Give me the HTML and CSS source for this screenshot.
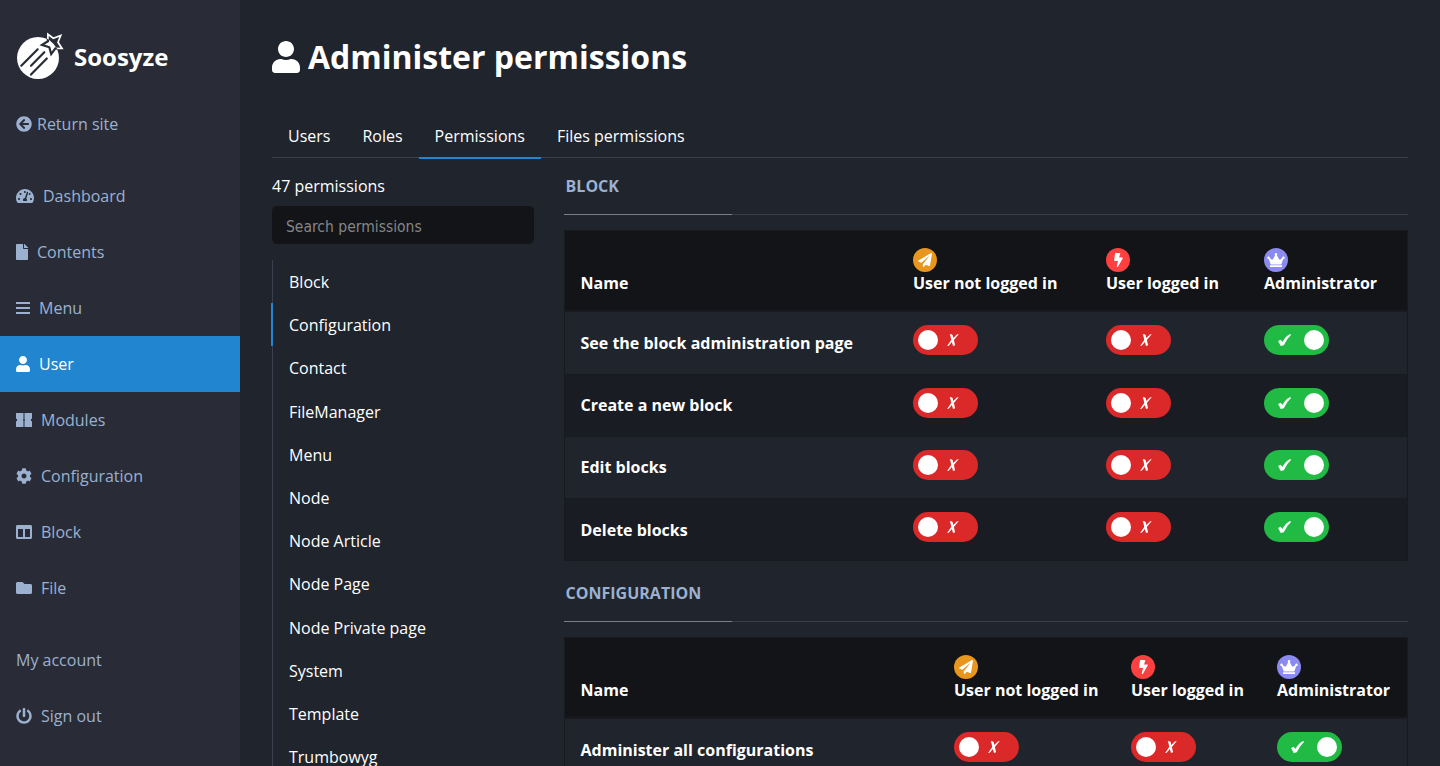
FILE: index.html
```html
<!DOCTYPE html>
<html lang="en">
<head>
<meta charset="utf-8">
<title>Administer permissions</title>
<link rel="stylesheet" href="styles.css">
</head>
<body>
<svg class="sprite" aria-hidden="true">
  <symbol id="user" viewBox="0 0 448 512"><path d="M224 256c70.7 0 128-57.3 128-128S294.7 0 224 0 96 57.3 96 128s57.3 128 128 128zm89.6 32h-16.7c-22.2 10.2-46.9 16-72.9 16s-50.6-5.8-72.9-16h-16.7C60.2 288 0 348.2 0 422.4V464c0 26.5 21.5 48 48 48h352c26.5 0 48-21.5 48-48v-41.6c0-74.2-60.2-134.4-134.4-134.4z"/></symbol>
  <symbol id="plane" viewBox="0 0 512 512"><path d="M476 3.2L12.5 270.6c-18.1 10.4-15.8 35.6 2.2 43.2L121 358.4l287.3-253.2c5.5-4.9 13.3 2.6 8.6 8.3L176 407v80.5c0 23.6 28.5 32.9 42.5 15.8L282 426l124.6 52.2c14.2 6 30.4-2.9 33-18.2l72-432C515 7.8 493.3-6.8 476 3.2z"/></symbol>
  <symbol id="bolt" viewBox="0 0 320 512"><path d="M296 160H180.6l42.6-129.8C227.2 15 215.7 0 200 0H56C44 0 33.8 8.9 32.2 20.8l-32 240C-1.7 275.2 9.5 288 24 288h118.7L96.6 482.5c-3.6 15.2 8 29.5 23.3 29.5 8.4 0 16.4-4.4 20.8-12l176-304c9.3-15.9-2.2-36-20.7-36z"/></symbol>
  <symbol id="crown" viewBox="0 0 640 512"><path d="M528 448H112c-8.8 0-16 7.2-16 16v32c0 8.8 7.2 16 16 16h416c8.8 0 16-7.2 16-16v-32c0-8.8-7.2-16-16-16zm64-320c-26.5 0-48 21.5-48 48 0 7.1 1.6 13.7 4.4 19.8L476 239.2c-15.4 9.2-35.3 4-44.2-11.6L350.3 85C361 76.2 368 63 368 48c0-26.5-21.5-48-48-48s-48 21.5-48 48c0 15 7 28.2 17.7 37l-81.5 142.6c-8.9 15.6-28.9 20.8-44.2 11.6l-72.3-43.4c2.7-6 4.4-12.7 4.4-19.8 0-26.5-21.5-48-48-48S0 149.5 0 176s21.5 48 48 48c2.6 0 5.2-.4 7.7-.8L128 416h384l72.3-192.8c2.5.4 5.1.8 7.7.8 26.5 0 48-21.5 48-48s-21.5-48-48-48z"/></symbol>
  <symbol id="cross" viewBox="0 0 12 12"><path d="M2.700.3Q5.200-.2 5.800 1.400L6.300 3.900L9.900.400L11.800.100L6.900 5.900L8.100 11.200L6 11.900L4.900 7.900L1.700 11.700L.1 12L4.200 5.900L3.500 2.200Z"/></symbol>
  <symbol id="check" viewBox="0 0 13 12"><path d="M.1 6.900L2.800 5.700L4.400 7.900Q7.500 2.200 12.300 0L13 .9Q8.800 4.500 5.800 11.200L2.700 12Z"/></symbol>
</svg>
<div class="app">
  <aside class="sidebar">
    <a class="brand">
      <svg class="brand-logo" width="48" height="48" viewBox="16 32 48 48">
        <circle cx="38" cy="58" r="21" fill="#fff"/>
        <g fill="none" stroke="#292c37" stroke-width="2.200" stroke-linecap="round">
          <path d="M21.300 65.700L37.700 49.300M31 65.700L44.300 52.200M31 74.600L46.800 58.500"/>
        </g>
        <clipPath id="disc"><circle cx="38" cy="58" r="21.300"/></clipPath>
        <path d="M47.900 34.200L53.300 38.200L60.700 35.500L58 42.300L62 48.500L55.400 48.400L51.200 54.100L49.300 47.300L42 44.900L47.900 41.300Z" fill="none" stroke="#fff" stroke-width="1.700"/>
        <path d="M47.900 34.200L53.300 38.200L60.700 35.500L58 42.300L62 48.500L55.400 48.400L51.200 54.100L49.300 47.300L42 44.900L47.900 41.300Z" fill="none" stroke="#292c37" stroke-width="2.200" clip-path="url(#disc)"/>
      </svg>
      <span class="brand-name">Soosyze</span>
    </a>
    <nav class="menu">
      <a class="menu-item close"><svg width="16" height="16" viewBox="0 0 512 512"><path d="M256 504C119 504 8 393 8 256S119 8 256 8s248 111 248 248-111 248-248 248zm28.900-143.600L209.400 288H392c13.300 0 24-10.700 24-24v-16c0-13.300-10.700-24-24-24H209.400l75.500-72.400c9.700-9.300 9.900-24.800.4-34.300l-11-10.900c-9.400-9.400-24.600-9.400-33.900 0L107.700 239c-9.400 9.400-9.400 24.600 0 33.900l132.700 132.700c9.400 9.400 24.600 9.400 33.900 0l11-10.900c9.500-9.500 9.300-25-.4-34.300z"/></svg>Return site</a>
    </nav>
    <nav class="menu">
      <a class="menu-item"><svg width="18" height="16" viewBox="0 0 576 512"><path d="M288 32C128.940 32 0 160.940 0 320c0 52.800 14.250 102.260 39.060 144.800 5.610 9.620 16.300 15.200 27.440 15.200h443c11.140 0 21.830-5.580 27.440-15.200C561.750 422.260 576 372.800 576 320c0-159.060-128.940-288-288-288zm0 64c14.710 0 26.580 10.130 30.320 23.650-1.110 2.260-2.640 4.230-3.450 6.670l-9.220 27.670c-5.130 3.490-10.970 6.010-17.640 6.010-17.670 0-32-14.330-32-32S270.330 96 288 96zM96 384c-17.670 0-32-14.330-32-32s14.330-32 32-32 32 14.330 32 32-14.330 32-32 32zm48-160c-17.670 0-32-14.330-32-32s14.330-32 32-32 32 14.330 32 32-14.330 32-32 32zm246.770-72.410l-61.330 184C343.130 347.330 352 364.540 352 384c0 11.720-3.380 22.550-8.880 32H232.880c-5.500-9.450-8.880-20.280-8.880-32 0-33.940 26.500-61.430 59.900-63.590l61.340-184.010c4.170-12.560 17.730-19.450 30.360-15.170 12.570 4.190 19.350 17.790 15.170 30.360zm14.660 57.200l15.520-46.550c3.470-1.290 7.130-2.230 11.050-2.230 17.670 0 32 14.330 32 32s-14.330 32-32 32c-11.380-.01-20.890-6.280-26.570-15.220zM480 384c-17.670 0-32-14.330-32-32s14.330-32 32-32 32 14.330 32 32-14.330 32-32 32z"/></svg>Dashboard</a>
      <a class="menu-item"><svg width="12" height="16" viewBox="0 0 384 512"><path d="M224 136V0H24C10.700 0 0 10.700 0 24v464c0 13.300 10.700 24 24 24h336c13.300 0 24-10.700 24-24V160H248c-13.200 0-24-10.800-24-24zm160-14.100v6.100H256V0h6.100c6.400 0 12.500 2.500 17 7l97.900 98c4.500 4.500 7 10.600 7 16.900z"/></svg>Contents</a>
      <a class="menu-item"><svg width="14" height="16" viewBox="0 0 14 16"><path d="M0 2h14v2H0zM0 7h14v2H0zM0 12h14v2H0z"/></svg>Menu</a>
      <a class="menu-item active"><svg width="14" height="16"><use href="#user"/></svg>User</a>
      <a class="menu-item"><svg width="16" height="16" viewBox="0 0 16 16"><path d="M0 1h7.500v6a1.400 1.400 0 0 0 0 2v6H0V9.200a1.200 1.200 0 0 0 0-2.400zM8.500 1H16v5.800a1.200 1.200 0 0 0 0 2.400V15H8.500V9a1.400 1.400 0 0 0 0-2z"/></svg>Modules</a>
      <a class="menu-item"><svg width="16" height="16" viewBox="0 0 512 512"><path d="M487.400 315.700l-42.600-24.600c4.300-23.200 4.300-47 0-70.200l42.600-24.600c4.900-2.800 7.100-8.600 5.500-14-11.100-35.600-30-67.800-54.700-94.600-3.800-4.100-10-5.100-14.800-2.300L380.800 110c-17.900-15.400-38.500-27.300-60.800-35.100V25.800c0-5.600-3.900-10.500-9.400-11.700-36.700-8.200-74.300-7.800-109.200 0-5.500 1.200-9.400 6.100-9.400 11.700V75c-22.200 7.900-42.800 19.800-60.800 35.100L88.700 85.500c-4.900-2.800-11-1.900-14.800 2.300-24.700 26.700-43.600 58.900-54.700 94.600-1.700 5.400.6 11.200 5.500 14L67.300 221c-4.300 23.200-4.300 47 0 70.200l-42.600 24.600c-4.900 2.800-7.100 8.600-5.500 14 11.100 35.600 30 67.800 54.700 94.600 3.800 4.100 10 5.100 14.800 2.300l42.600-24.600c17.900 15.400 38.500 27.300 60.800 35.100v49.200c0 5.600 3.900 10.500 9.400 11.700 36.700 8.200 74.300 7.800 109.200 0 5.500-1.200 9.400-6.100 9.400-11.700v-49.200c22.200-7.900 42.800-19.800 60.800-35.100l42.600 24.600c4.900 2.800 11 1.900 14.800-2.300 24.700-26.700 43.600-58.900 54.700-94.600 1.500-5.500-.7-11.300-5.600-14.100zM256 336c-44.100 0-80-35.900-80-80s35.900-80 80-80 80 35.900 80 80-35.900 80-80 80z"/></svg>Configuration</a>
      <a class="menu-item"><svg width="16" height="16" viewBox="0 0 512 512"><path d="M464 32H48C21.490 32 0 53.490 0 80v352c0 26.510 21.490 48 48 48h416c26.510 0 48-21.490 48-48V80c0-26.510-21.490-48-48-48zM224 416H64V160h160v256zm224 0H288V160h160v256z"/></svg>Block</a>
      <a class="menu-item"><svg width="16" height="16" viewBox="0 0 512 512"><path d="M464 128H272l-64-64H48C21.490 64 0 85.490 0 112v288c0 26.510 21.490 48 48 48h416c26.510 0 48-21.490 48-48V176c0-26.510-21.490-48-48-48z"/></svg>File</a>
    </nav>
    <nav class="menu">
      <a class="menu-item">My account</a>
      <a class="menu-item"><svg width="16" height="16" viewBox="0 0 512 512"><path d="M400 54.100c63 45 104 118.600 104 201.900 0 136.800-110.800 247.700-247.500 248C120 504.300 8.200 393 8 256.400 7.900 173.100 48.900 99.300 111.800 54.200c11.700-8.300 28-4.800 35 7.700L162.600 90c5.900 10.500 3.100 23.800-6.600 31-41.500 30.800-68 79.600-68 134.900-.1 92.300 74.500 168.100 168 168.100 91.600 0 168.600-74.200 168-169.100-.3-51.800-24.700-101.800-68.100-134-9.700-7.200-12.400-20.500-6.500-30.900l15.800-28.100c7-12.400 23.200-16.100 34.800-7.800zM296 264V24c0-13.300-10.700-24-24-24h-32c-13.300 0-24 10.700-24 24v240c0 13.300 10.700 24 24 24h32c13.300 0 24-10.700 24-24z"/></svg>Sign out</a>
    </nav>
  </aside>

  <main class="main">
    <h1 class="title"><svg width="28" height="32"><use href="#user"/></svg>Administer permissions</h1>
    <nav class="tabs">
      <a class="tab">Users</a>
      <a class="tab">Roles</a>
      <a class="tab active">Permissions</a>
      <a class="tab">Files permissions</a>
    </nav>
    <div class="columns">
      <div class="filter">
        <div class="count">47 permissions</div>
        <input class="search" type="text" placeholder="Search permissions">
        <ul class="modules">
          <li>Block</li>
          <li class="active">Configuration</li>
          <li>Contact</li>
          <li>FileManager</li>
          <li>Menu</li>
          <li>Node</li>
          <li>Node Article</li>
          <li>Node Page</li>
          <li>Node Private page</li>
          <li>System</li>
          <li>Template</li>
          <li>Trumbowyg</li>
        </ul>
      </div>
      <div class="groups">
        <section class="group">
          <h2 class="legend">Block</h2>
          <table class="perms block-table">
            <colgroup><col class="c-name"><col class="c-guest"><col class="c-logged"><col></colgroup>
            <thead>
              <tr>
                <th>Name</th>
                <th><span class="badge guest"><svg width="14" height="14"><use href="#plane"/></svg></span>User not logged in</th>
                <th><span class="badge logged"><svg width="9" height="14"><use href="#bolt"/></svg></span>User logged in</th>
                <th><span class="badge admin"><svg width="18" height="14"><use href="#crown"/></svg></span>Administrator</th>
              </tr>
            </thead>
            <tbody>
              <tr>
                <th>See the block administration page</th>
                <td><span class="toggle"><i></i><svg width="12" height="12"><use href="#cross"/></svg></span></td>
                <td><span class="toggle"><i></i><svg width="12" height="12"><use href="#cross"/></svg></span></td>
                <td><span class="toggle on"><svg width="13" height="12"><use href="#check"/></svg><i></i></span></td>
              </tr>
              <tr>
                <th>Create a new block</th>
                <td><span class="toggle"><i></i><svg width="12" height="12"><use href="#cross"/></svg></span></td>
                <td><span class="toggle"><i></i><svg width="12" height="12"><use href="#cross"/></svg></span></td>
                <td><span class="toggle on"><svg width="13" height="12"><use href="#check"/></svg><i></i></span></td>
              </tr>
              <tr>
                <th>Edit blocks</th>
                <td><span class="toggle"><i></i><svg width="12" height="12"><use href="#cross"/></svg></span></td>
                <td><span class="toggle"><i></i><svg width="12" height="12"><use href="#cross"/></svg></span></td>
                <td><span class="toggle on"><svg width="13" height="12"><use href="#check"/></svg><i></i></span></td>
              </tr>
              <tr>
                <th>Delete blocks</th>
                <td><span class="toggle"><i></i><svg width="12" height="12"><use href="#cross"/></svg></span></td>
                <td><span class="toggle"><i></i><svg width="12" height="12"><use href="#cross"/></svg></span></td>
                <td><span class="toggle on"><svg width="13" height="12"><use href="#check"/></svg><i></i></span></td>
              </tr>
            </tbody>
          </table>
        </section>
        <section class="group">
          <h2 class="legend">Configuration</h2>
          <table class="perms config-table">
            <colgroup><col class="c-name"><col class="c-guest"><col class="c-logged"><col></colgroup>
            <thead>
              <tr>
                <th>Name</th>
                <th><span class="badge guest"><svg width="14" height="14"><use href="#plane"/></svg></span>User not logged in</th>
                <th><span class="badge logged"><svg width="9" height="14"><use href="#bolt"/></svg></span>User logged in</th>
                <th><span class="badge admin"><svg width="18" height="14"><use href="#crown"/></svg></span>Administrator</th>
              </tr>
            </thead>
            <tbody>
              <tr>
                <th>Administer all configurations</th>
                <td><span class="toggle"><i></i><svg width="12" height="12"><use href="#cross"/></svg></span></td>
                <td><span class="toggle"><i></i><svg width="12" height="12"><use href="#cross"/></svg></span></td>
                <td><span class="toggle on"><svg width="13" height="12"><use href="#check"/></svg><i></i></span></td>
              </tr>
            </tbody>
          </table>
        </section>
      </div>
    </div>
  </main>
</div>
</body>
</html>
```

FILE: styles.css
```css
* { box-sizing: border-box; }
body {
  margin: 0;
  height: 766px;
  overflow: hidden;
  background: #20242c;
  color: #fff;
  font: 16px/24px "Open Sans", "Noto Sans", sans-serif;
}
svg { fill: currentColor; flex: none; }
.sprite { display: none; }
.app { display: flex; height: 766px; overflow: hidden; }

.sidebar { width: 240px; flex: none; background: #292c37; color: #9bb1cf; }
.brand { display: flex; align-items: center; gap: 10px; height: 96px; padding: 16px 16px 0; color: #fff; }
.brand-name { font-size: 24px; font-weight: 700; line-height: 32px; margin-top: 1px; }
.menu { margin-bottom: 16px; }
.menu-item { display: flex; align-items: center; gap: 9px; height: 56px; padding: 0 16px; }
.menu-item.close { gap: 5px; }
.menu-item.active { background: #2185d0; color: #fff; }

.main { flex: 1; min-width: 0; padding: 33px 32px 0; }
.title { display: flex; align-items: center; gap: 8px; margin: 0; height: 48px; font-size: 32px; line-height: 48px; font-weight: 700; }
.tabs { display: flex; height: 42px; margin-top: 35px; border-bottom: 1px solid #3a3f4e; }
.tab { padding: 8px 16px 9px; height: 43px; border-bottom: 2px solid transparent; }
.tab.active { border-color: #2185d0; }

.columns { display: flex; gap: 30px; }
.filter { width: 262px; padding-top: 16px; }
.count { height: 32px; }
.search {
  display: block;
  width: 100%;
  height: 38px;
  padding: 3px 14px 0;
  border: 0;
  border-radius: 5px;
  background: #131418;
  color: #fff;
  font: 15.500px "DejaVu Sans Condensed", "Open Sans", sans-serif;
}
.search::placeholder { color: #858585; }
.modules { list-style: none; margin: 16px 0 0; padding: 0; border-left: 1px solid #3a3f4e; }
.modules li { height: 43.200px; line-height: 44.400px; margin-left: -2px; border-left: 2px solid transparent; padding-left: 16px; }
.modules li.active { border-color: #2185d0; }

.groups { flex: 1; min-width: 0; padding-top: 16px; }
.group { margin-bottom: 20px; }
.legend {
  margin: 0 0 15px;
  height: 41px;
  padding-left: 1.600px;
  color: #9bb1cf;
  font-size: 16px;
  font-weight: 700;
  line-height: 24px;
  text-transform: uppercase;
  background: linear-gradient(90deg, #7b7f88 168px, #3a3f4e 168px) bottom / 100% 1px no-repeat;
}
.perms { width: 844px; table-layout: fixed; border: 1px solid #181a1f; border-spacing: 0; text-align: left; }
.perms th, .perms td { padding: 0 16px; white-space: nowrap; }
.perms thead th { height: 80px; padding: 17px 16px 15px; vertical-align: bottom; background: #131418; border-bottom: 1px solid #181a1f; }
.perms tbody th, .perms tbody td { height: 62px; border-top: 1px solid #181a1f; vertical-align: middle; }
.perms tbody td { padding-top: 13px; vertical-align: top; }
.perms tbody tr:first-child > * { height: 63px; }
.perms tbody tr:nth-child(2) th, .perms tbody tr:nth-child(3) th { padding-bottom: 2px; }
.perms tbody tr:nth-child(even) { background: #1a1c23; }
.perms tr > th:first-child { padding-left: 15.500px; }
.block-table .c-name { width: 332px; }
.block-table .c-guest { width: 193px; }
.block-table .c-logged { width: 158px; }
.config-table .c-name { width: 373px; }
.config-table .c-guest { width: 177px; }
.config-table .c-logged { width: 146px; }

.badge { display: flex; align-items: center; justify-content: center; width: 24px; height: 24px; margin-bottom: -1px; border-radius: 50%; }
.badge svg { margin-top: -1px; }
.badge.guest { background: #e8961e; }
.badge.logged { background: #ff4040; }
.badge.admin { background: #8a8af0; }

.toggle { display: flex; align-items: center; gap: 9px; width: 65px; height: 30px; padding: 0 5px; border-radius: 15px; background: #db2828; }
.toggle.on { justify-content: flex-end; gap: 13px; background: #21ba45; }
.toggle i { width: 20px; height: 20px; border-radius: 50%; background: #fff; }
```
